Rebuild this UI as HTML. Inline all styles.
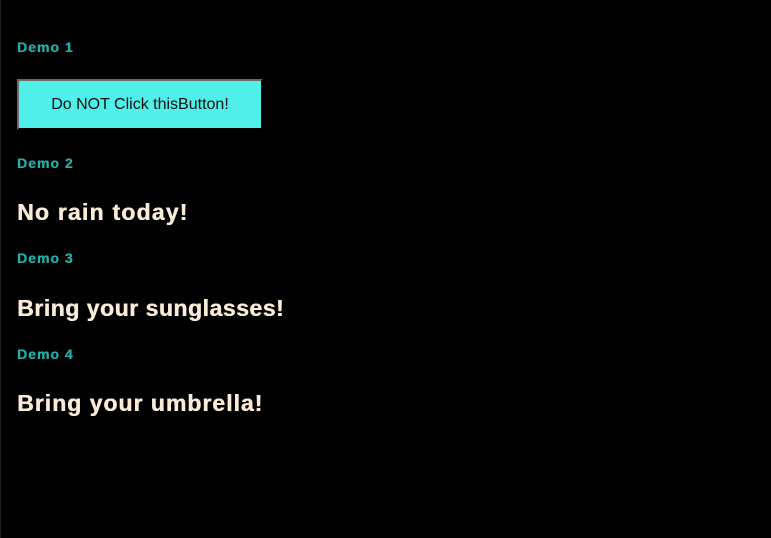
<!DOCTYPE html>
<html><head><meta charset="utf-8"><style>
html,body{margin:0;padding:0;background:#000;width:771px;height:538px;overflow:hidden;position:relative;font-family:"Liberation Sans",sans-serif}
.edge{position:absolute;left:0;top:0;width:1px;height:538px;background:#1c1f24}
.h{position:absolute;left:17px;color:#20b2aa;font-weight:bold;font-size:14px;line-height:16px;letter-spacing:1px;text-shadow:0.3px 0 0 #20b2aa}
.t{position:absolute;left:17px;color:#faebd7;font-weight:bold;font-size:23px;line-height:26px;text-shadow:0.5px 0 0 #faebd7}
.btn{position:absolute;left:17px;top:79px;width:242px;height:47px;background:#50efe9;border:2px outset #6a6a6a;border-right-color:#3a3a3a;border-bottom-color:#3a3a3a;font-size:16px;color:#111;display:flex;align-items:center;justify-content:center;box-sizing:content-box}
</style></head><body>
<div class="edge"></div>
<div class="h" style="top:39px">Demo 1</div>
<div class="btn">Do NOT Click thisButton!</div>
<div class="h" style="top:155px">Demo 2</div>
<div class="t" style="top:199px;letter-spacing:1.2px">No rain today!</div>
<div class="h" style="top:250px">Demo 3</div>
<div class="t" style="top:295px;letter-spacing:0.52px">Bring your sunglasses!</div>
<div class="h" style="top:346px">Demo 4</div>
<div class="t" style="top:390px;letter-spacing:1px">Bring your umbrella!</div>
</body></html>
